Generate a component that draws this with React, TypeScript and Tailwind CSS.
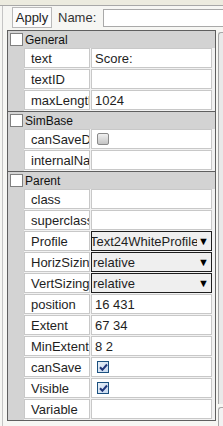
import React from "react";

type Row = {
  label: string;
  value?: string;
  kind?: "text" | "check" | "checked" | "select";
};

const groups: { title: string; rows: Row[] }[] = [
  {
    title: "General",
    rows: [
      { label: "text", value: "Score:" },
      { label: "textID" },
      { label: "maxLength", value: "1024" },
    ],
  },
  {
    title: "SimBase",
    rows: [
      { label: "canSaveDynamicFields", kind: "check" },
      { label: "internalName" },
    ],
  },
  {
    title: "Parent",
    rows: [
      { label: "class" },
      { label: "superclass" },
      { label: "Profile", value: "Text24WhiteProfile", kind: "select" },
      { label: "HorizSizing", value: "relative", kind: "select" },
      { label: "VertSizing", value: "relative", kind: "select" },
      { label: "position", value: "16 431" },
      { label: "Extent", value: "67 34" },
      { label: "MinExtent", value: "8 2" },
      { label: "canSave", kind: "checked" },
      { label: "Visible", kind: "checked" },
      { label: "Variable" },
    ],
  },
];

function CheckedBox() {
  return (
    <div className="w-[12px] h-[12px] border border-[#1c5180] bg-gradient-to-br from-[#e6eef7] to-[#c9daf0] flex items-center justify-center">
      <svg width="9" height="9" viewBox="0 0 9 9">
        <path d="M1 4.2 L3.4 6.8 L8 1.5" stroke="#21367a" strokeWidth="2" fill="none" />
      </svg>
    </div>
  );
}

function GrayBox() {
  return (
    <div className="w-[12px] h-[12px] rounded-[2px] border border-[#8a8a8a] bg-gradient-to-b from-[#f0f0f0] to-[#c4c4c4]" />
  );
}

function Value({ row }: { row: Row }) {
  if (row.kind === "select") {
    return (
      <div className="w-[121px] h-[20px] border border-[#1e1e1e] bg-[#efefef] flex items-center overflow-hidden">
        <div className="flex-1 min-w-0 overflow-hidden flex justify-start whitespace-nowrap">
          {row.label === "Profile" ? (
            <span className="ml-[-2px]">{row.value}</span>
          ) : (
            <span className="ml-[1px]">{row.value}</span>
          )}
        </div>
        <span className="text-[11px] w-[10px] shrink-0 text-black mr-[3px] ml-[1px]">▼</span>
      </div>
    );
  }
  return (
    <div className="w-[121px] h-[20px] border border-[#c8c8c8] bg-white flex items-center pl-[3px] overflow-hidden whitespace-nowrap">
      {row.kind === "check" && (
        <div className="ml-[2px]">
          <GrayBox />
        </div>
      )}
      {row.kind === "checked" && (
        <div className="ml-[2px]">
          <CheckedBox />
        </div>
      )}
      {row.value}
    </div>
  );
}

export default function App() {
  return (
    <div className="w-[223px] h-[426px] overflow-hidden bg-[#f6f6f3] text-[13px] text-[#1e1e1e] font-['Liberation_Sans',Arial,sans-serif] leading-none">
      <div className="h-[6px] bg-[#ecebdf] border-b border-[#a8a8a8]" />
      <div className="border-l border-[#c4c4c4] ml-[2px]">
        <div className="flex items-center h-[23px] pl-[9px]">
          <button className="w-[40px] h-[21px] border border-[#b9b9b9] bg-[#fcfcfc] text-[#222] flex items-center justify-center">
            Apply
          </button>
          <span className="ml-[6px] text-[#333]">Name:</span>
          <div className="ml-[7px] flex-1 h-[18px] border border-[#a9a9a9] bg-white mr-[-4px]" />
        </div>
        <div className="flex mt-[1px] pl-[4px]">
          <div className="w-[209px] shrink-0">
            {groups.map((g, gi) => (
              <div
                key={g.title}
                className={`border-x border-b border-[#5f5f5f] bg-[#d3d3d3] ${gi === 0 ? "border-t" : ""}`}
              >
                <div className="h-[17px] flex items-center pl-[2px]">
                  <div className="w-[13px] h-[13px] border border-[#808080] bg-white" />
                  <span className="ml-[2px] text-[12px] text-[#111]">{g.title}</span>
                </div>
                <div className="flex">
                  <div className="w-[16px] shrink-0" />
                  <div className="flex-1 bg-[#f2f2f2] pb-[1px]">
                    {g.rows.map((r) => (
                      <div key={r.label} className="flex gap-[1px] pr-[2px] mb-[1px] last:mb-0">
                        <div className="w-[66px] h-[20px] border border-[#c8c8c8] bg-white flex items-center pl-[6px] overflow-hidden whitespace-nowrap">
                          {r.label}
                        </div>
                        <Value row={r} />
                      </div>
                    ))}
                  </div>
                </div>
              </div>
            ))}
          </div>
          <div className="ml-[2px] mt-[2px] flex-1 flex flex-col">
            <div className="h-[372px] border-l border-t border-[#a6a6a6] rounded-tl-[3px] bg-[#e9e9e9]" />
            <div className="mt-[3px] h-[30px] border-l border-t border-[#a6a6a6] rounded-tl-[3px] bg-[#f2f2f2]" />
          </div>
        </div>
      </div>
    </div>
  );
}
